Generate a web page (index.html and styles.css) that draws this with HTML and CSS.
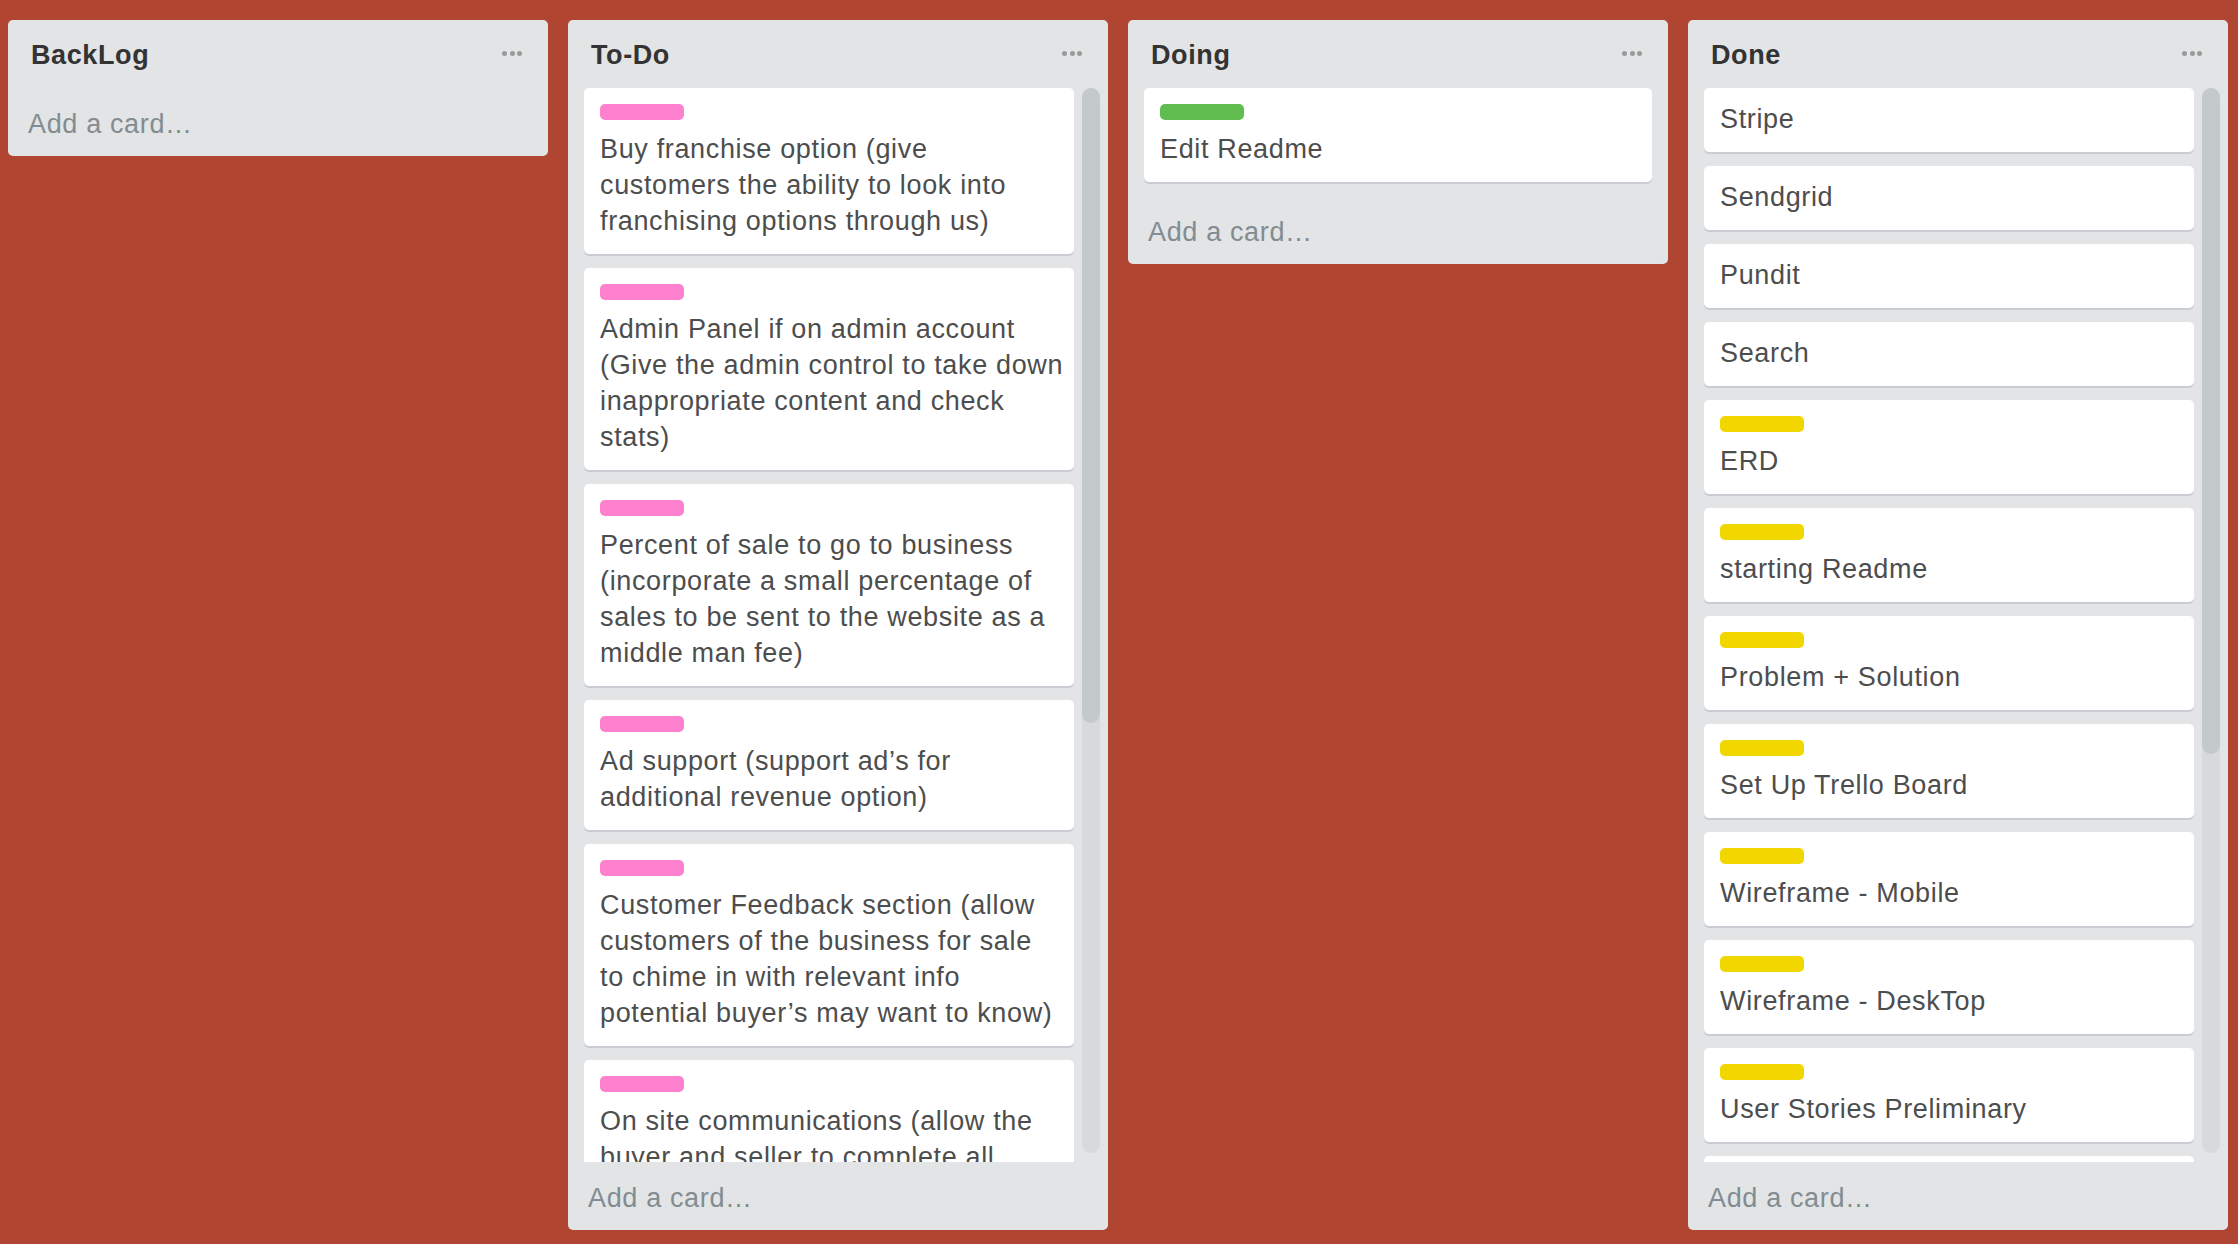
FILE: index.html
```html
<!DOCTYPE html>
<html lang="en">
<head>
<meta charset="utf-8">
<title>Board</title>
<link rel="stylesheet" href="styles.css">
</head>
<body>
<div class="board">

  <section class="list">
    <header class="list-header">
      <h2 class="list-title">BackLog</h2>
      <span class="list-menu"><i></i><i></i><i></i></span>
    </header>
    <div class="list-body"><div class="cards"></div></div>
    <div class="add-card">Add a card…</div>
  </section>

  <section class="list">
    <header class="list-header">
      <h2 class="list-title">To-Do</h2>
      <span class="list-menu"><i></i><i></i><i></i></span>
    </header>
    <div class="list-body scrolling">
      <div class="cards">
        <div class="card"><div class="label pink"></div>Buy franchise option (give<br>customers the ability to look into<br>franchising options through us)</div>
        <div class="card"><div class="label pink"></div>Admin Panel if on admin account<br>(Give the admin control to take down<br>inappropriate content and check<br>stats)</div>
        <div class="card"><div class="label pink"></div>Percent of sale to go to business<br>(incorporate a small percentage of<br>sales to be sent to the website as a<br>middle man fee)</div>
        <div class="card"><div class="label pink"></div>Ad support (support ad’s for<br>additional revenue option)</div>
        <div class="card"><div class="label pink"></div>Customer Feedback section (allow<br>customers of the business for sale<br>to chime in with relevant info<br>potential buyer’s may want to know)</div>
        <div class="card"><div class="label pink"></div>On site communications (allow the<br>buyer and seller to complete all<br>transactions through the site)</div>
      </div>
      <div class="scrollbar"><div class="thumb thumb-todo"></div></div>
    </div>
    <div class="add-card">Add a card…</div>
  </section>

  <section class="list">
    <header class="list-header">
      <h2 class="list-title">Doing</h2>
      <span class="list-menu"><i></i><i></i><i></i></span>
    </header>
    <div class="list-body">
      <div class="cards">
        <div class="card"><div class="label green"></div>Edit Readme</div>
      </div>
    </div>
    <div class="add-card">Add a card…</div>
  </section>

  <section class="list">
    <header class="list-header">
      <h2 class="list-title">Done</h2>
      <span class="list-menu"><i></i><i></i><i></i></span>
    </header>
    <div class="list-body scrolling">
      <div class="cards">
        <div class="card">Stripe</div>
        <div class="card">Sendgrid</div>
        <div class="card">Pundit</div>
        <div class="card">Search</div>
        <div class="card"><div class="label yellow"></div>ERD</div>
        <div class="card"><div class="label yellow"></div>starting Readme</div>
        <div class="card"><div class="label yellow"></div>Problem + Solution</div>
        <div class="card"><div class="label yellow"></div>Set Up Trello Board</div>
        <div class="card"><div class="label yellow"></div>Wireframe - Mobile</div>
        <div class="card"><div class="label yellow"></div>Wireframe - DeskTop</div>
        <div class="card"><div class="label yellow"></div>User Stories Preliminary</div>
        <div class="card"><div class="label yellow"></div>Presentation</div>
      </div>
      <div class="scrollbar"><div class="thumb thumb-done"></div></div>
    </div>
    <div class="add-card">Add a card…</div>
  </section>

</div>
</body>
</html>
```

FILE: styles.css
```css
html, body {
  margin: 0;
  padding: 0;
}

body {
  background: #b04632;
  font-family: "Liberation Sans", Arial, Helvetica, sans-serif;
  height: 1244px;
  overflow: hidden;
}

.board {
  display: flex;
  align-items: flex-start;
  gap: 20px;
  padding: 20px 8px 0;
  box-sizing: border-box;
  height: 1244px;
}

.list {
  flex: none;
  width: 540px;
  max-height: 1209.5px;
  background: #e2e4e6;
  border-radius: 5px;
  display: flex;
  flex-direction: column;
}

.list-header {
  flex: none;
  height: 68px;
  box-sizing: border-box;
  display: flex;
  align-items: center;
  justify-content: space-between;
  padding: 0 26px 0 23px;
}

.list-title {
  margin: 1.5px 0 0;
  font-size: 27px;
  line-height: 36px;
  font-weight: 700;
  letter-spacing: 0.6px;
  color: #333333;
}

.list-menu {
  display: flex;
  gap: 2.3px;
  margin-top: -1px;
}

.list-menu i {
  display: block;
  width: 5px;
  height: 5px;
  border-radius: 50%;
  background: #999999;
}

.list-body {
  flex: 1 1 auto;
  min-height: 0;
  display: flex;
  gap: 8px;
  padding: 0 16px;
  overflow: hidden;
}

.list-body.scrolling {
  padding-right: 8px;
}

.cards {
  flex: 1;
  min-width: 0;
  overflow: hidden;
}

.card {
  background: #ffffff;
  border-radius: 5px;
  box-shadow: 0 2px 0 #c9ccd0;
  padding: 13px 12px 15px 16px;
  margin-bottom: 14px;
  font-size: 27px;
  line-height: 36px;
  letter-spacing: 0.65px;
  color: #4d4d4d;
  white-space: nowrap;
}

.label {
  width: 84px;
  height: 16px;
  border-radius: 5px;
  margin: 3px 0 11px;
}

.label.pink { background: #ff80ce; }
.label.green { background: #61bd4f; }
.label.yellow { background: #f2d600; }

.scrollbar {
  flex: none;
  width: 18px;
  margin-bottom: 8.5px;
  background: #d6dadc;
  border-radius: 9px;
}

.thumb {
  background: #c4c9cc;
  border-radius: 9px;
}

.thumb-todo { height: 635px; }
.thumb-done { height: 666px; }

.add-card {
  flex: none;
  padding: 18px 20px 14px;
  font-size: 27px;
  line-height: 36px;
  letter-spacing: 0.65px;
  color: #838c91;
}
```
